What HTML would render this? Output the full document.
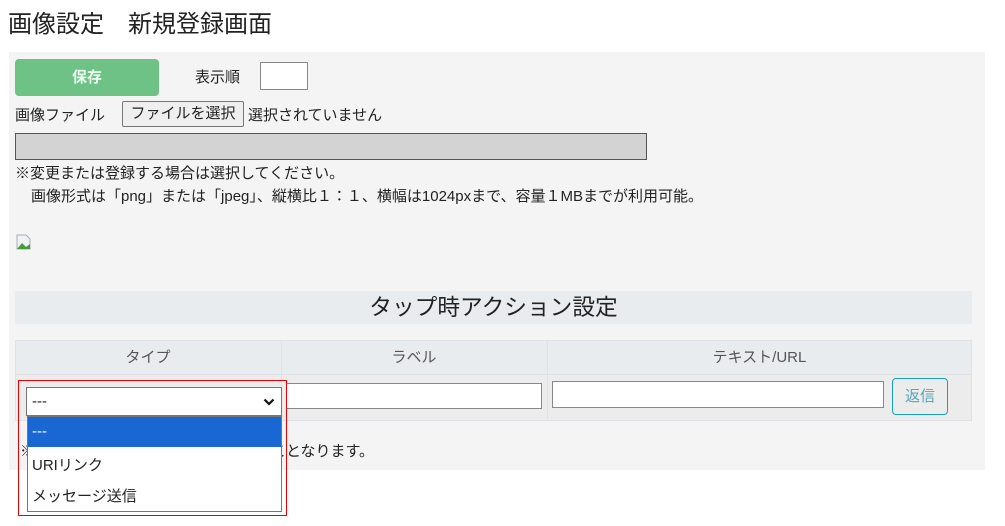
<!DOCTYPE html>
<html><head><meta charset="utf-8"><style>
*{box-sizing:border-box;margin:0;padding:0}
body{width:1005px;height:526px;background:#fff;font-family:"Liberation Sans","Noto Sans CJK JP",sans-serif;color:#222;position:relative;overflow:hidden;font-size:15px}
.a{position:absolute;white-space:nowrap}
</style></head><body>
<div class="a" style="left:8px;top:4px;font-size:24px;color:#222">画像設定　新規登録画面</div>
<div class="a" style="left:9px;top:52px;width:976px;height:418px;background:#f4f4f4"></div>
<div class="a" style="left:15px;top:59px;width:144px;height:37px;background:#6ec285;border-radius:4px;color:#eafff0;font-weight:bold;text-align:center;line-height:37px;font-size:15px">保存</div>
<div class="a" style="left:195px;top:66px">表示順</div>
<div class="a" style="left:260px;top:62px;width:48px;height:28px;background:#fff;border:1px solid #888"></div>
<div class="a" style="left:15px;top:104px">画像ファイル</div>
<div class="a" style="left:122px;top:101px;width:122px;height:26px;background:#efefef;border:1px solid #777;border-radius:2px;text-align:center;line-height:24px">ファイルを選択</div>
<div class="a" style="left:248px;top:104px">選択されていません</div>
<div class="a" style="left:15px;top:133px;width:632px;height:27px;background:#d3d3d3;border:1px solid #555"></div>
<div class="a" style="left:15px;top:162px">※変更または登録する場合は選択してください。</div>
<div class="a" style="left:31px;top:185px">画像形式は「png」または「jpeg」、縦横比１：１、横幅は1024pxまで、容量１MBまでが利用可能。</div>
<svg class="a" style="left:16px;top:234px" width="16" height="16" viewBox="0 0 16 16"><path d="M1 1h9l4 4v10H1z" fill="#eef2f5" stroke="#aab"/><path d="M1 15 L6 9 L10 13 L14 10 V15Z" fill="#4a9a3a"/></svg>
<div class="a" style="left:15px;top:291px;width:957px;height:33px;background:#e9ecef;text-align:center;font-size:22.7px;line-height:33px;color:#222">タップ時アクション設定</div>
<div class="a" style="left:15px;top:340px;width:957px;height:80px;background:#e9ecef;border:1px solid #dee2e6"></div>
<div class="a" style="left:15px;top:374px;width:957px;height:47px;background:#ececec;border:1px solid #dee2e6"></div>
<div class="a" style="left:281px;top:340px;width:1px;height:80px;background:#dee2e6"></div>
<div class="a" style="left:547px;top:340px;width:1px;height:80px;background:#dee2e6"></div>
<div class="a" style="left:15px;top:346px;width:266px;text-align:center;color:#555">タイプ</div>
<div class="a" style="left:281px;top:346px;width:266px;text-align:center;color:#555">ラベル</div>
<div class="a" style="left:547px;top:346px;width:425px;text-align:center;color:#555">テキスト/URL</div>
<div class="a" style="left:286px;top:383px;width:256px;height:26px;background:#fff;border:1px solid #888"></div>
<div class="a" style="left:552px;top:381px;width:332px;height:27px;background:#fff;border:1px solid #888"></div>
<div class="a" style="left:892px;top:378px;width:56px;height:37px;border:1px solid #17a2b8;border-radius:4px;color:#5aa6b3;text-align:center;line-height:35px">返信</div>
<div class="a" style="left:20px;top:440px">※</div>
<div class="a" style="left:271px;top:440px">ことなります。</div>
<div class="a" style="left:18px;top:380px;width:269px;height:136px;border:1px solid #e00;background:transparent"></div>
<div class="a" style="left:26px;top:387px;width:256px;height:29px;background:#fff;border:1px solid #777;padding-left:5px;line-height:27px">---
<svg style="position:absolute;right:6px;top:10px" width="12" height="8" viewBox="0 0 12 8"><path d="M1.5 1.5 L6 6 L10.5 1.5" fill="none" stroke="#111" stroke-width="2.2"/></svg></div>
<div class="a" style="left:27px;top:416px;width:255px;height:96px;background:#fff;border:1px solid #777"></div>
<div class="a" style="left:28px;top:417px;width:253px;height:30px;background:#1967d2;color:#fff;padding-left:4px;line-height:30px">---</div>
<div class="a" style="left:32px;top:454px">URIリンク</div>
<div class="a" style="left:32px;top:485px">メッセージ送信</div>
</body></html>
